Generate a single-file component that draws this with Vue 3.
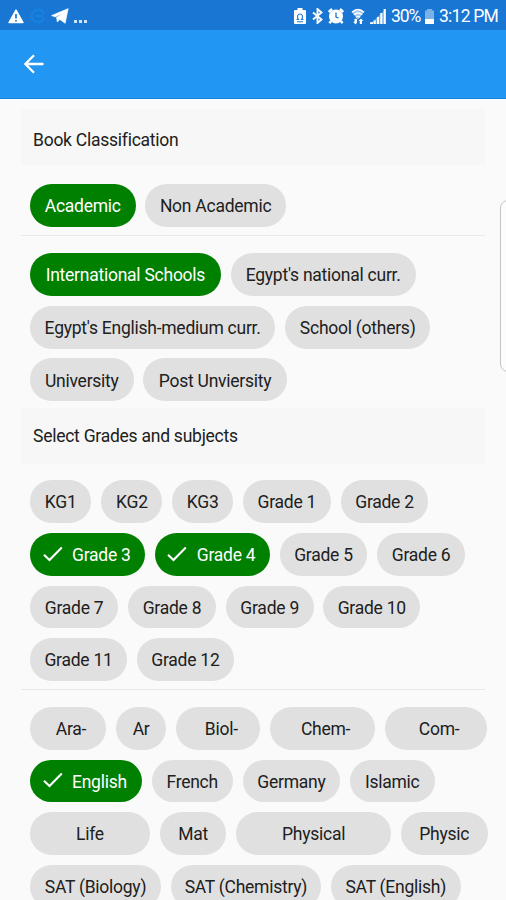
<template>
  <div class="screen">
    <header class="status-bar">
      <div class="status-left">
        <svg class="icon-warning" width="16" height="15" viewBox="0 0 16 15">
          <path d="M8 1 15 13.5H1Z" fill="#fff" stroke="#fff" stroke-width="1.4" stroke-linejoin="round" />
          <path d="M8 5v4.6M8 11v1.6" stroke="#1976d2" stroke-width="1.7" />
        </svg>
        <svg class="icon-sync" width="16" height="16" viewBox="0 0 16 16">
          <path d="M14 6A6.3 6.3 0 1 0 14 10M5 8h8" fill="none" stroke="#1782e2" stroke-width="2.4" />
        </svg>
        <svg class="icon-telegram" width="18" height="16" viewBox="0 0 18 16">
          <path d="M.5 7.6 17.2.6 14.2 15.3 8.8 11.5 6.3 14 5.5 9.4 12.2 4.7 4.2 8.9Z" fill="#fff" stroke="#fff" stroke-width="0.6" />
        </svg>
        <span class="more"><i></i><i></i><i></i></span>
      </div>
      <div class="status-right">
        <svg class="icon-saver" width="12" height="16" viewBox="0 0 12 16">
          <path d="M3.5 0h5v2H11q1 0 1 1v12q0 1-1 1H1q-1 0-1-1V3q0-1 1-1h2.5Z" fill="#fff" />
          <path d="M2.5 11.5H4.5C2.5 9 3.5 6 6 6S9.5 9 7.5 11.5h2M3 13.8h6" fill="none" stroke="#1976d2" stroke-width="1.1" />
        </svg>
        <svg class="icon-bluetooth" width="11" height="16" viewBox="0 0 11 16">
          <path d="M1 4.5 9.5 11.5 5.5 15V1L9.5 4.5 1 11.5" fill="none" stroke="#fff" stroke-width="1.9" />
        </svg>
        <svg class="icon-alarm" width="16" height="16" viewBox="0 0 16 16">
          <path d="M.8 4 4 1M15.2 4 12 1M3 13 1.5 15.2M13 13l1.5 2.2" stroke="#fff" stroke-width="2.4" />
          <circle cx="8" cy="8.5" r="7" fill="#fff" />
          <path d="M8 4.5V9l2.6 1" fill="none" stroke="#1976d2" stroke-width="1.3" />
        </svg>
        <svg class="icon-wifi" width="14" height="17" viewBox="0 0 14 17">
          <path d="M.5 3.8Q7-1.8 13.5 3.8L7 11.5Z" fill="#fff" opacity="0.6" />
          <path d="M1 4.2Q7-1.2 13 4.2M3 6.7Q7 3.2 11 6.7M5 9.2Q7 7.5 9 9.2" fill="none" stroke="#fff" stroke-width="1.3" />
          <path d="M3.5 10.8v3H2.2L4.5 16.5 6 14.5v-3.7ZM8.8 16v-3H7.5L10 10.5l2.5 2.5H11v3Z" fill="#fff" />
        </svg>
        <svg class="icon-signal" width="16" height="15" viewBox="0 0 16 15">
          <path d="M16 0V15H0Z" fill="#fff" opacity="0.35" />
          <path d="M0 14.2h3M4.7 15v-3.5M8 15V8M11.3 15V4M14.7 15V0" stroke="#fff" stroke-width="2.1" />
        </svg>
        <span class="percent">30%</span>
        <svg class="icon-battery" width="9" height="15" viewBox="0 0 9 15">
          <path d="M2 0h5v1.5H9V15H0V1.5h2Z" fill="#79b1e8" />
          <path d="M0 10h9v5H0Z" fill="#fff" />
        </svg>
        <span class="time">3:12 PM</span>
      </div>
    </header>

    <nav class="app-bar">
      <button class="back" aria-label="Back">
        <svg width="20" height="20" viewBox="0 0 20 20">
          <path d="M10 1.2 1.4 10l8.6 8.8M1.4 10H19.5" fill="none" stroke="#fff" stroke-width="2.3" />
        </svg>
      </button>
    </nav>

    <main class="content">
      <section v-for="section in sections" :key="section.title">
        <h2 class="section-title">{{ section.title }}</h2>
        <template v-for="(group, g) in section.groups" :key="g">
          <hr v-if="g > 0" class="divider" />
          <div class="chip-group">
            <div v-for="(row, r) in group" :key="r" class="chip-row">
              <button
                v-for="chip in row"
                :key="chip.label"
                class="chip"
                :class="{ selected: chip.selected, checked: chip.checked, hyphenated: chip.label.endsWith('-') }"
                :style="{ width: chip.width + 'px' }"
                @click="chip.selected = !chip.selected"
              >
                <svg v-if="chip.checked" class="check" width="20" height="16" viewBox="0 0 20 16">
                  <path d="M1 8.7 6.5 14 18.8 1.5" fill="none" stroke="#fff" stroke-width="2.1" />
                </svg>
                <span>{{ chip.label }}</span>
              </button>
            </div>
          </div>
        </template>
      </section>
    </main>

    <div class="edge-handle"></div>
  </div>
</template>

<script setup>
import { reactive } from 'vue'

const chip = (label, width) => ({ label, width, selected: false, checked: false })
const active = (label, width) => ({ label, width, selected: true, checked: false })
const ticked = (label, width) => ({ label, width, selected: true, checked: true })

const sections = reactive([
  {
    title: 'Book Classification',
    groups: [
      [[active('Academic', 105.5), chip('Non Academic', 140.5)]],
      [
        [active('International Schools', 190.8), chip("Egypt's national curr.", 184.9)],
        [chip("Egypt's English-medium curr.", 245.2), chip('School (others)', 145.2)],
        [chip('University', 103.6), chip('Post Unviersity', 143.2)]
      ]
    ]
  },
  {
    title: 'Select Grades and subjects',
    groups: [
      [
        [chip('KG1', 61.4), chip('KG2', 61.2), chip('KG3', 60.7), chip('Grade 1', 87.8), chip('Grade 2', 87.8)],
        [ticked('Grade 3', 114.9), ticked('Grade 4', 114.9), chip('Grade 5', 87.8), chip('Grade 6', 87.8)],
        [chip('Grade 7', 88.2), chip('Grade 8', 87.8), chip('Grade 9', 87.8), chip('Grade 10', 96.7)],
        [chip('Grade 11', 97), chip('Grade 12', 97)]
      ],
      [
        [chip('Ara-', 76), chip('Ar', 50.5), chip('Biol-', 84), chip('Chem-', 104.8), chip('Com-', 102.4)],
        [ticked('English', 111.7), chip('French', 81.2), chip('Germany', 97.4), chip('Islamic', 84.6)],
        [chip('Life', 119.8), chip('Mat', 66.7), chip('Physical', 154.7), chip('Physic', 86.8)],
        [chip('SAT (Biology)', 131), chip('SAT (Chemistry)', 150), chip('SAT (English)', 130)]
      ]
    ]
  }
])
</script>

<style>
body {
  margin: 0;
  overflow: hidden;
}
</style>

<style scoped>
.screen {
  position: relative;
  width: 506px;
  height: 900px;
  overflow: hidden;
  background: #fafafa;
  color: #202020;
  font-family: Roboto, "Liberation Sans", sans-serif;
}

.status-bar {
  display: flex;
  justify-content: space-between;
  height: 30px;
  padding: 0 8px;
  box-sizing: border-box;
  background: #1976d2;
  color: #fff;
}

.status-left,
.status-right {
  display: flex;
  align-items: center;
  padding-top: 2px;
}

.icon-sync {
  margin-left: 6px;
}

.icon-telegram {
  margin-left: 5px;
}

.more {
  display: flex;
  gap: 2px;
  margin: 10px 0 0 5px;
}

.more i {
  width: 3px;
  height: 3px;
  background: #cfe5fa;
}

.icon-bluetooth {
  margin-left: 6px;
}

.icon-alarm {
  margin-left: 5px;
}

.icon-wifi {
  margin-left: 7px;
}

.icon-signal {
  margin-left: 5px;
}

.percent,
.time {
  font-size: 17.5px;
  line-height: 28px;
  white-space: nowrap;
}

.percent {
  width: 28px;
  margin-left: 5px;
  letter-spacing: -1.1px;
}

.icon-battery {
  margin-left: 6px;
}

.time {
  width: 59px;
  margin-left: 5px;
  letter-spacing: -0.75px;
}

.app-bar {
  display: flex;
  align-items: center;
  height: 69px;
  padding-left: 24px;
  box-sizing: border-box;
  background: #2196f3;
  border-bottom: 1px solid #1685df;
}

.back {
  display: flex;
  padding: 0;
  border: none;
  background: none;
}

.content {
  padding: 10px 21px 0;
}

.section-title {
  height: 56px;
  margin: 0;
  padding-left: 12px;
  background: #f7f7f7;
  font-size: 17.5px;
  letter-spacing: -0.25px;
  font-weight: 400;
  line-height: 57px;
}

section:first-child .section-title {
  line-height: 63px;
}

.chip-group {
  display: flex;
  flex-direction: column;
  gap: 9.9px;
  padding: 16px 0 7.5px 9px;
}

section:first-child .section-title + .chip-group {
  padding: 19px 0 8px 9px;
}

.divider {
  height: 1px;
  margin: 0;
  border: none;
  background: #e8e8e8;
}

.divider + .chip-group {
  padding-top: 17.3px;
  padding-bottom: 7px;
}

.chip-row {
  display: flex;
  gap: 9.9px;
}

.chip {
  display: flex;
  flex: none;
  align-items: center;
  justify-content: center;
  height: 42.8px;
  padding: 1.5px 0 0;
  border: none;
  border-radius: 22px;
  background: #e0e0e0;
  color: #202020;
  font-family: inherit;
  font-size: 17.5px;
  letter-spacing: -0.25px;
  white-space: nowrap;
}

.chip.selected {
  background: #008000;
  color: #fff;
}

.chip.checked {
  justify-content: flex-start;
  padding-left: 12.5px;
}

.chip.hyphenated {
  padding-left: 6px;
}

.check {
  margin: -3px 9.5px 0 0;
}

.edge-handle {
  position: absolute;
  top: 200px;
  left: 500px;
  width: 20px;
  height: 170px;
  border: 1px solid #c4c4c4;
  border-radius: 8px;
  background: #fcfcfc;
}
</style>
